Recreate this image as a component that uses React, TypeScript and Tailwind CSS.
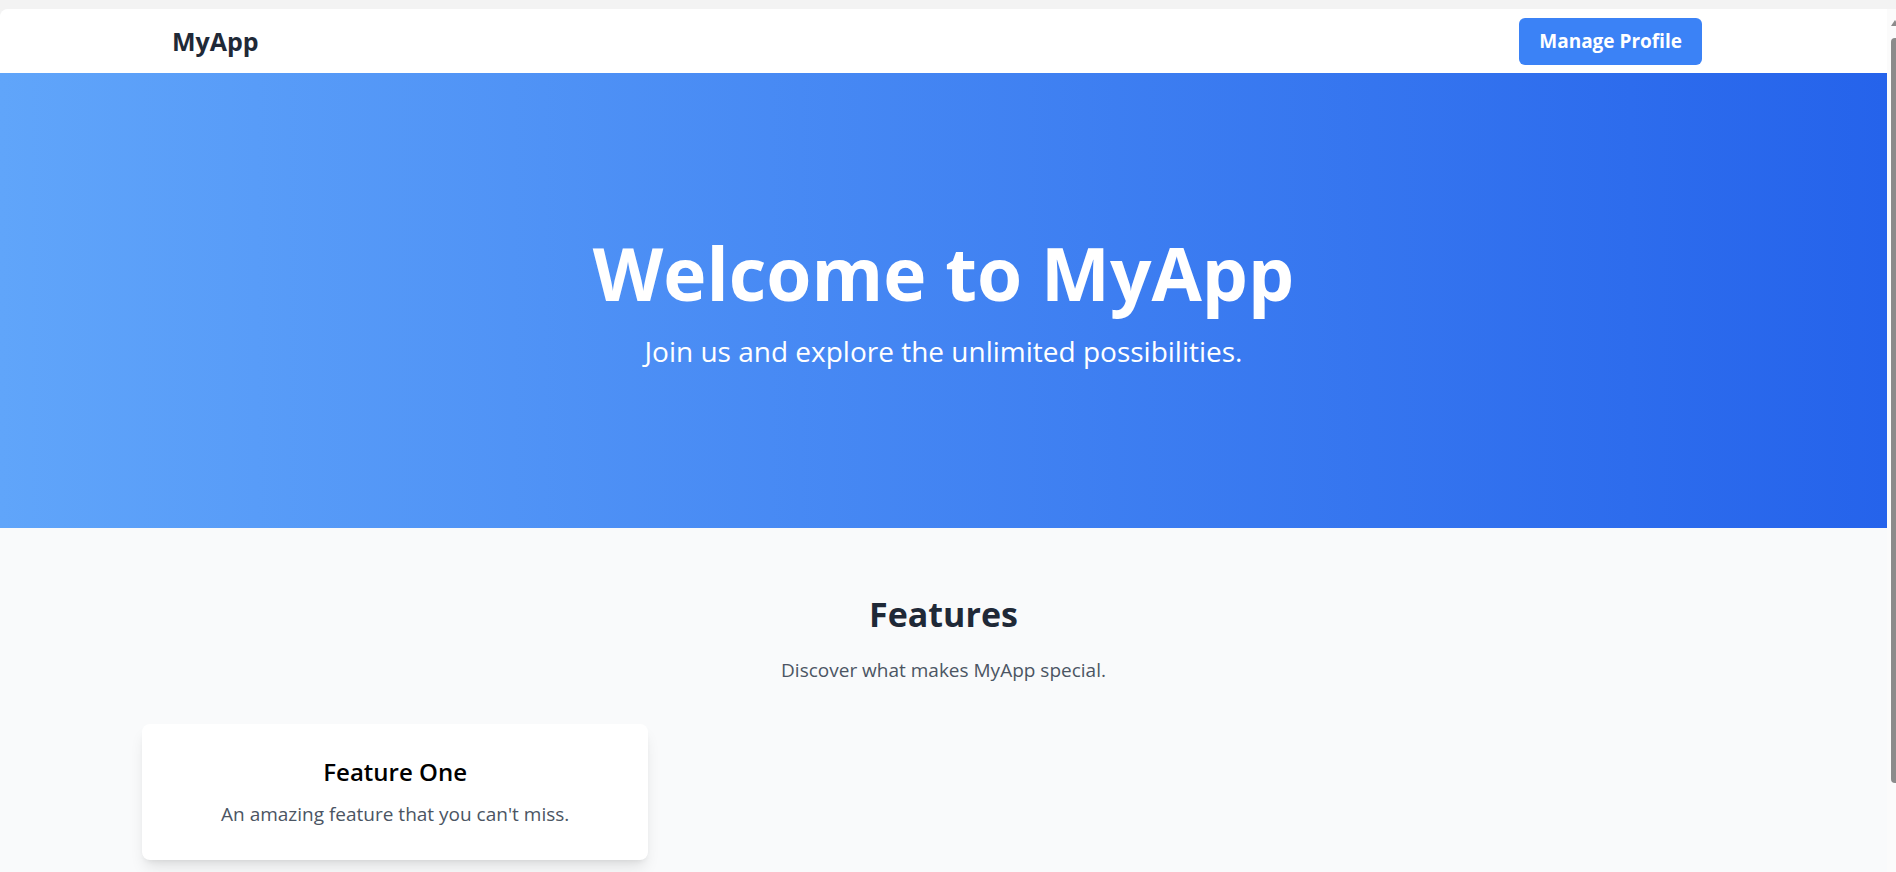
import React from "react";

const features = [
    { title: "Feature One", text: "An amazing feature that you can't miss." },
];

export default function App() {
    return (
        <div className="h-[872px] overflow-hidden bg-[#f3f3f3] pt-[9px] font-['Open_Sans',sans-serif]">
            <div className="flex h-full">
                {/* Page */}
                <div className="flex-1 overflow-hidden rounded-tl-lg bg-[#f9fafb]">
                    {/* Navbar */}
                    <nav className="h-16 bg-white">
                        <div className="flex h-full items-center justify-between pl-[172px] pr-[185px]">
                            <span className="text-[25px] font-bold leading-8 text-[#1f2937]">MyApp</span>
                            <button className="rounded-md bg-[#3b82f6] px-5 py-2.5 text-[19px] font-bold leading-[27px] text-white">
                                Manage Profile
                            </button>
                        </div>
                    </nav>

                    {/* Hero */}
                    <section className="flex h-[455px] flex-col items-center justify-center bg-[linear-gradient(to_right,#60a5fa,#2563eb)] pt-[4px] text-white">
                        <h1 className="text-[73px] font-bold leading-[72px]">Welcome to MyApp</h1>
                        <p className="mt-6 text-[28px] leading-9">Join us and explore the unlimited possibilities.</p>
                    </section>

                    {/* Features */}
                    <section className="pt-[66px]">
                        <h2 className="text-center text-[34px] font-bold leading-10 text-[#1f2937]">Features</h2>
                        <p className="mt-[22px] text-center text-[19px] leading-7 text-[#4b5563]">Discover what makes MyApp special.</p>
                        <div className="mt-10 grid grid-cols-3 gap-[42px] px-[142px]">
                            {features.map((f) => (
                                <div key={f.title} className="rounded-lg bg-white p-8 text-center shadow-lg">
                                    <h3 className="mb-3 text-2xl font-semibold text-black">{f.title}</h3>
                                    <p className="text-[19px] leading-7 text-[#4b5563]">{f.text}</p>
                                </div>
                            ))}
                        </div>
                    </section>
                </div>

                {/* Scrollbar */}
                <div className="flex w-[9px] flex-col items-start bg-[#fbfbfb] pl-[4px]">
                    <div className="mt-[11px] h-0 w-0 border-x-[4px] border-b-[6px] border-x-transparent border-b-[#8b8b8b]"></div>
                    <div className="mt-[12px] h-[745px] w-[8px] rounded-full bg-[#8b8b8b]"></div>
                </div>
            </div>
        </div>
    );
}
